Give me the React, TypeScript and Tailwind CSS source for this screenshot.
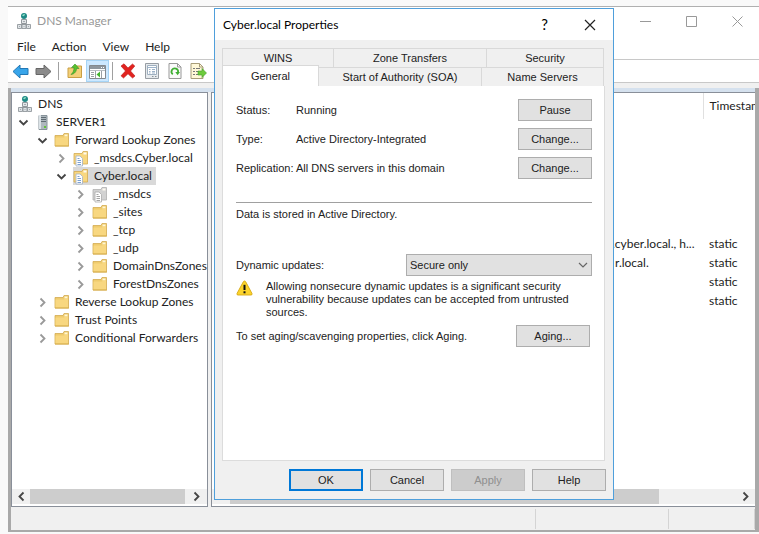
import type { ReactNode } from "react";

const uiFont = "font-['Lato','Open_Sans',sans-serif]";
const dialogFont = "font-['Liberation_Sans',Arial,sans-serif]";

function DnsIcon() {
  return (
    <svg width="16" height="18" viewBox="0 0 16 18" aria-hidden="true">
      <path d="M3 12.500h10" fill="none" stroke="#8a8f94" />
      <circle cx="8" cy="4" r="3" fill="#1f8a86" />
      <path d="M6 3.500q1-2 3-1.500l-.5 1.500-1 .7z" fill="#8fe0c8" />
      <path d="M5.500 7.500h5v4h-5z" fill="#e3e6e8" stroke="#92989d" />
      <path d="M1.500 12.500h4v4h-4zM6 12.500h4v4H6zM10.500 12.500h4v4h-4z" fill="#dfe3e6" stroke="#92989d" strokeWidth=".9" />
      <path d="M3 14.500h1M7.500 14.500h1M12 14.500h1M7 9.500h2" stroke="#a5abb0" />
    </svg>
  );
}

function ServerIcon() {
  return (
    <svg width="16" height="16" viewBox="0 0 16 16" aria-hidden="true">
      <path d="M4 1.500h8v14H4z" fill="#aeb8be" stroke="#87939a" />
      <path d="M4 1h2v14H4z" fill="#dbe2e6" />
      <path d="M6 3.500h5M6 5.500h5M6 7.500h5" stroke="#5f6b73" />
      <path d="M9 12h2v2H9z" fill="#5fc33a" />
    </svg>
  );
}

function FolderIcon() {
  return (
    <svg width="16" height="16" viewBox="0 0 16 16" aria-hidden="true">
      <path d="M1 3.500h8l1-2h4.500v12.500H1z" fill="#efcb6d" stroke="#d3ab52" strokeWidth=".8" />
      <path d="M10.500 2.500h3v2h-3z" fill="#fff6d5" />
      <path d="M1.500 5.500h8.500l1-1h3V13.500H1.500z" fill="#f8d780" />
      <path d="M1 14h14" stroke="#d9b04e" />
    </svg>
  );
}

function ZoneIcon({ muted = false }: { muted?: boolean }) {
  return (
    <svg width="16" height="17" viewBox="0 0 16 17" aria-hidden="true">
      <path
        d="M1 3.500h8l1-2h4.500v12.500H1z"
        fill={muted ? "#d2d2d2" : "#f8d780"}
        stroke={muted ? "#b0b0b0" : "#d3ab52"}
        strokeWidth=".8"
      />
      <path d="M10.500 2.500h3v2h-3z" fill="#fffaf0" />
      <path d="M3 6h4l2.500 2.500V16H3z" fill="#fff" stroke={muted ? "#aaa" : "#a3b3c6"} strokeWidth=".8" />
      <path d="M4.500 8.500h2M4.500 10.500h3.500M4.500 12.500h3.500M4.500 14.500h3.500" stroke={muted ? "#9a9a9a" : "#6d96cc"} strokeWidth=".9" />
    </svg>
  );
}

function Arrow({ left = false }: { left?: boolean }) {
  return (
    <svg width="17" height="15" viewBox="0 0 17 15" aria-hidden="true">
      {left ? (
        <path d="M1 7.500 8 1v3.500h8v6H8V14z" fill="#38a5ea" stroke="#2378b5" strokeLinejoin="round" />
      ) : (
        <path d="M16 7.500 9 1v3.500H1v6h8V14z" fill="#8b8b8b" stroke="#666" strokeLinejoin="round" />
      )}
    </svg>
  );
}

function FolderUpIcon() {
  return (
    <svg width="16" height="16" viewBox="0 0 16 16" aria-hidden="true">
      <path d="M1 5h7l1-2h5.500v11.500H1z" fill="#f4d078" stroke="#c99f45" />
      <path d="M4 11.500C8 11 9.500 8 9.500 5.500H12L8 1 4.500 4.500H7C7 7 6.500 9.500 4 11.500z" fill="#58c22e" stroke="#36902a" strokeWidth=".6" />
    </svg>
  );
}

function TreePaneIcon() {
  return (
    <svg width="17" height="15" viewBox="0 0 17 15" aria-hidden="true">
      <path d="M.5 1.500h16v13H.5z" fill="#fff" stroke="#84898e" />
      <path d="M1 2h15v3H1z" fill="#8e969d" />
      <path d="M12 3.500h1M14 3.500h1" stroke="#fff" />
      <path d="M1 6.500h15" stroke="#b9bec3" />
      <path d="M6.500 7v7M12.500 7v7" stroke="#9aa0a5" />
      <path d="M2 8.500h3M2 10.500h3M2 12.500h3" stroke="#9aa0a5" />
      <path d="M11 7.500v6L7.500 10.500z" fill="#42b52e" />
    </svg>
  );
}

function DeleteIcon() {
  return (
    <svg width="16" height="16" viewBox="0 0 16 16" aria-hidden="true">
      <path d="M1 3 4 .8 8 5l4.500-4 2.300 2L10.500 8l4.500 5-2.500 2L8 10.800 3.500 15 1 12.800 5.500 8z" fill="#e2231f" stroke="#b81a18" strokeWidth=".6" />
    </svg>
  );
}

function PropertiesIcon() {
  return (
    <svg width="16" height="16" viewBox="0 0 16 16" aria-hidden="true">
      <path d="M1.500.5h13v15h-13z" fill="#e6eaed" stroke="#979da3" />
      <path d="M3.500 2.500h9v9h-9z" fill="#fff" stroke="#9fb0c0" />
      <path d="M4 4.500h8" stroke="#9db4cb" />
      <path d="M5 6.500h1.500M8 6.500h3M5 8.500h1.500M8 8.500h3M5 10h1.500M8 10h3" stroke="#9cb2c8" />
      <path d="M8 13.500h1.500M11 13.500h1.500" stroke="#8a9299" />
    </svg>
  );
}

function RefreshIcon() {
  return (
    <svg width="14" height="16" viewBox="0 0 14 16" aria-hidden="true">
      <path d="M1 .5h8.500L13 4v11.500H1z" fill="#fafafa" stroke="#989898" />
      <path d="M9.500.5V4H13" fill="none" stroke="#989898" />
      <path d="M4.800 11.300A3.300 3.300 0 1 1 10 9.500" fill="none" stroke="#3fae32" strokeWidth="1.700" />
      <path d="M7.300 9h4.700l-2.400 3.300z" fill="#3fae32" />
    </svg>
  );
}

function ExportIcon() {
  return (
    <svg width="17" height="16" viewBox="0 0 17 16" aria-hidden="true">
      <path d="M1 .5h8.500L13 4v11.500H1z" fill="#fff8d8" stroke="#a79c78" />
      <path d="M9.500.5V4H13" fill="none" stroke="#a79c78" />
      <path d="M3 5.500h2M6 5.500h4M3 8.500h2M6 8.500h3M3 11.500h2M6 11.500h3" stroke="#777" />
      <path d="M8 8h4V5.500l4.500 4.500-4.500 4.500V12H8z" fill="#6ecb3c" stroke="#42a02a" strokeWidth=".6" />
    </svg>
  );
}

function WarningIcon() {
  return (
    <svg className="shrink-0" width="17" height="16" viewBox="0 0 17 16" aria-hidden="true">
      <path d="M8.500 1q.8 0 1.200.8l6.300 11.700q.5 1.500-1 1.500H2Q.5 15 1 13.500L7.300 1.800Q7.700 1 8.500 1z" fill="#fcd42c" stroke="#d6a713" strokeWidth=".9" />
      <path d="M8.500 4.800v5.200" stroke="#111" strokeWidth="2" />
      <path d="M8.500 11.300v2" stroke="#111" strokeWidth="2" />
    </svg>
  );
}

function Chevron({ dir, color = "#444" }: { dir: "left" | "right" | "down"; color?: string }) {
  const paths = { left: "M7.500 1.500 3.500 5.500l4 4", right: "M3.500 1.500l4 4-4 4", down: "M1.500 3.500l4 4 4-4" };
  return (
    <svg width="11" height="11" viewBox="0 0 11 11" aria-hidden="true">
      <path d={paths[dir]} fill="none" stroke={color} strokeWidth="1.800" />
    </svg>
  );
}

type Node = { label: string; level: 0 | 1 | 2 | 3 | 4; icon: ReactNode; open?: boolean; selected?: boolean };

const nodes: Node[] = [
  { label: "DNS", level: 0, icon: <DnsIcon /> },
  { label: "SERVER1", level: 1, icon: <ServerIcon />, open: true },
  { label: "Forward Lookup Zones", level: 2, icon: <FolderIcon />, open: true },
  { label: "_msdcs.Cyber.local", level: 3, icon: <ZoneIcon /> },
  { label: "Cyber.local", level: 3, icon: <ZoneIcon />, open: true, selected: true },
  { label: "_msdcs", level: 4, icon: <ZoneIcon muted /> },
  { label: "_sites", level: 4, icon: <FolderIcon /> },
  { label: "_tcp", level: 4, icon: <FolderIcon /> },
  { label: "_udp", level: 4, icon: <FolderIcon /> },
  { label: "DomainDnsZones", level: 4, icon: <FolderIcon /> },
  { label: "ForestDnsZones", level: 4, icon: <FolderIcon /> },
  { label: "Reverse Lookup Zones", level: 2, icon: <FolderIcon /> },
  { label: "Trust Points", level: 2, icon: <FolderIcon /> },
  { label: "Conditional Forwarders", level: 2, icon: <FolderIcon /> },
];

const indent = ["pl-[5px]", "pl-[3px]", "pl-[22px]", "pl-[41px]", "pl-[60px]"];

function TreeRow({ node }: { node: Node }) {
  return (
    <li role="treeitem" aria-selected={!!node.selected} className={`flex h-[18px] items-center ${indent[node.level]}`}>
      {node.level > 0 && (
        <button type="button" aria-label={node.open ? "Collapse" : "Expand"} className="flex w-5 shrink-0 items-center pl-[3px]">
          <Chevron dir={node.open ? "down" : "right"} color={node.open ? "#444" : "#999"} />
        </button>
      )}
      <span className={`flex h-[18px] items-center gap-[5px] whitespace-nowrap ${node.selected ? "bg-[#d9d9d9] pr-1" : ""}`}>
        <span className="shrink-0">{node.icon}</span>
        {node.label}
      </span>
    </li>
  );
}

const records = [
  { data: ".cyber.local., h...", time: "static" },
  { data: "r.local.", time: "static" },
  { data: "", time: "static" },
  { data: "", time: "static" },
];

function Separator() {
  return <span className="h-[18px] w-px shrink-0 bg-[#a0a0a0]" />;
}

function ToolButton({ label, children }: { label: string; children: ReactNode }) {
  return (
    <button type="button" aria-label={label} className="flex h-5 shrink-0 items-center">
      {children}
    </button>
  );
}

function PushButton({ children, look = "border-[#adadad] bg-[#e1e1e1]", disabled = false }: { children: ReactNode; look?: string; disabled?: boolean }) {
  return (
    <button type="button" disabled={disabled} className={`h-[22px] w-[74px] shrink-0 border ${look}`}>
      {children}
    </button>
  );
}

function Tab({ children, selected = false, size }: { children: ReactNode; selected?: boolean; size: string }) {
  return (
    <button
      type="button"
      role="tab"
      aria-selected={selected}
      className={`border-t border-r border-[#d9d9d9] ${size} ${selected ? "-mt-[2px] h-[21px] bg-white" : "h-[19px] bg-[#f0f0f0]"}`}
    >
      {children}
    </button>
  );
}

function PropertiesDialog() {
  return (
    <section
      role="dialog"
      aria-label="Cyber.local Properties"
      className={`absolute top-2 left-[214px] flex h-[492px] w-[400px] flex-col border border-[#4f9fdb] bg-[#f0f0f0] text-[11px] leading-[13px] text-[#222] ${dialogFont}`}
    >
      <header className={`flex h-[31px] shrink-0 items-center bg-white pr-[17px] pl-2 text-[12px] text-black ${uiFont}`}>
        <h2 className="flex-1">Cyber.local Properties</h2>
        <button type="button" aria-label="Help" className="mr-9 text-[15px]">?</button>
        <button type="button" aria-label="Close">
          <svg width="12" height="12" viewBox="0 0 12 12"><path d="M1 1l10 10M11 1 1 11" stroke="#222" strokeWidth="1.200" /></svg>
        </button>
      </header>

      <div className="flex flex-1 flex-col pt-2 pr-2 pl-[7px]">
        <div role="tablist" className="border-l border-[#d9d9d9]">
          <div className="flex">
            <Tab size="w-[111px]">WINS</Tab>
            <Tab size="w-[153px]">Zone Transfers</Tab>
            <Tab size="w-[117px]">Security</Tab>
          </div>
          <div className="flex">
            <Tab size="w-[96px]" selected>General</Tab>
            <Tab size="w-[163px]">Start of Authority (SOA)</Tab>
            <Tab size="w-[122px]">Name Servers</Tab>
          </div>
        </div>

        <div className="flex flex-1 flex-col border-r border-b border-l border-[#dcdcdc] bg-white pt-[13px] pr-3 pl-[13px]">
          <dl className="flex flex-col gap-[7px]">
            {[
              ["Status:", "Running", "Pause"],
              ["Type:", "Active Directory-Integrated", "Change..."],
              ["Replication:", "All DNS servers in this domain", "Change..."],
            ].map(([name, value, action]) => (
              <div key={name} className="flex items-center">
                <dt className="w-[60px] whitespace-nowrap">{name}</dt>
                <dd className="flex-1">{value}</dd>
                <dd className="flex"><PushButton>{action}</PushButton></dd>
              </div>
            ))}
          </dl>
          <hr className="mt-[23px] border-[#a0a0a0]" />
          <p className="mt-[5px]">Data is stored in Active Directory.</p>

          <div className="mt-[33px] flex items-center">
            <label htmlFor="updates" className="flex-1">Dynamic updates:</label>
            <span className="relative flex w-[186px]">
              <select id="updates" className="h-[22px] w-full appearance-none border border-[#adadad] bg-[#e1e1e1] pl-[3px] outline-none">
                <option>Secure only</option>
              </select>
              <svg className="pointer-events-none absolute top-2 right-1" width="10" height="7" viewBox="0 0 10 7"><path d="M1 1l4 4 4-4" fill="none" stroke="#666" strokeWidth="1.200" /></svg>
            </span>
          </div>
          <div className="mt-[4px] flex gap-[13px]">
            <WarningIcon />
            <p className="whitespace-nowrap">
              Allowing nonsecure dynamic updates is a significant security<br />
              vulnerability because updates can be accepted from untrusted<br />
              sources.
            </p>
          </div>
          <div className="mt-[6px] flex items-center pr-[2px]">
            <p className="flex-1">To set aging/scavenging properties, click Aging.</p>
            <PushButton>Aging...</PushButton>
          </div>
        </div>

        <footer className="-mr-[1px] flex h-[38px] shrink-0 items-start justify-end gap-[7px] pt-[8px]">
          <PushButton look="border-2 border-[#0078d7] bg-[#e1e1e1]">OK</PushButton>
          <PushButton>Cancel</PushButton>
          <PushButton disabled look="border-[#bfbfbf] bg-[#cccccc] text-[#8f8f8f]">Apply</PushButton>
          <PushButton>Help</PushButton>
        </footer>
      </div>
    </section>
  );
}

export default function App() {
  return (
    <div className={`relative flex h-screen flex-col overflow-hidden bg-[#f9f9f9] pt-[6px] pb-[2px] pl-2 text-[12px] leading-4 text-[#222] ${uiFont}`}>
      <main className="flex min-h-0 flex-1 flex-col border-t border-[#b0b0b0] bg-white">
        <header className="flex h-7 shrink-0 items-center gap-[5px] pr-4 pl-2">
          <DnsIcon />
          <h1 className="flex-1 text-[#999]">DNS Manager</h1>
          <div className="flex items-center gap-[35px]">
            <button type="button" aria-label="Minimize"><svg width="11" height="11" viewBox="0 0 11 11"><path d="M0 5.500h11" stroke="#999" /></svg></button>
            <button type="button" aria-label="Maximize"><svg width="11" height="11" viewBox="0 0 11 11"><path d="M.5.5h10v10H.5z" fill="none" stroke="#999" /></svg></button>
            <button type="button" aria-label="Close"><svg width="11" height="11" viewBox="0 0 11 11"><path d="M.5.5l10 10M10.500.5l-10 10" stroke="#999" /></svg></button>
          </div>
        </header>
        <nav className="flex h-6 shrink-0 items-center gap-4 pl-[9px]">
          <button type="button">File</button>
          <button type="button">Action</button>
          <button type="button">View</button>
          <button type="button">Help</button>
        </nav>
        <div className="flex h-6 shrink-0 items-center border-y border-[#c8c8c8] pl-[4px]">
          <div className="flex items-center gap-[6px]">
            <ToolButton label="Back"><Arrow left /></ToolButton>
            <ToolButton label="Forward"><Arrow /></ToolButton>
            <Separator />
          </div>
          <div className="ml-2 flex items-center gap-[3px]">
            <ToolButton label="Up one level"><FolderUpIcon /></ToolButton>
            <button type="button" aria-label="Show console tree" className="flex h-[22px] w-[23px] items-center justify-center border border-[#a6d4f5] bg-[#cce8ff]"><TreePaneIcon /></button>
            <Separator />
          </div>
          <div className="ml-[7px] flex items-center gap-2">
            <ToolButton label="Delete"><DeleteIcon /></ToolButton>
            <ToolButton label="Properties"><PropertiesIcon /></ToolButton>
            <ToolButton label="Refresh"><RefreshIcon /></ToolButton>
            <ToolButton label="Export list"><ExportIcon /></ToolButton>
            <Separator />
          </div>
        </div>
        <div className="h-[5px] shrink-0 bg-[#f0f0f0]" />

        <div className="flex min-h-0 flex-1 flex-col border-r-4 border-b-2 border-l-[3px] border-[#a9a9a9] bg-[#f0f0f0]">
          <div className="h-1 shrink-0 bg-[#d5e1ee]" />
          <div className="flex min-h-0 flex-1 gap-[3px]">
            <aside className="flex w-[197px] shrink-0 flex-col overflow-hidden border border-[#898f99] bg-white pb-[2px]">
              <ul role="tree" className="flex-1 overflow-hidden pt-[2px]">
                {nodes.map((node, i) => <TreeRow key={i} node={node} />)}
              </ul>
              <div className="flex h-[15px] shrink-0 items-center bg-[#f0f0f0]">
                <button type="button" aria-label="Scroll left" className="flex w-[18px] justify-center"><Chevron dir="left" /></button>
                <span className="h-full flex-1 bg-[#cdcdcd]" />
                <button type="button" aria-label="Scroll right" className="flex w-[22px] justify-center"><Chevron dir="right" /></button>
              </div>
            </aside>
            <section className="flex min-w-0 flex-1 flex-col overflow-hidden border-y border-l border-[#898f99] bg-white pb-[2px]">
              <div className="flex-1 overflow-hidden">
                <table className="w-full table-fixed text-left whitespace-nowrap">
                  <thead>
                    <tr className="h-[26px]">
                      <th className="w-[400px]" />
                      <th className="w-[91px] border-r border-[#e0e0e0]" />
                      <th className="overflow-hidden pl-[6px] font-normal">Timestamp</th>
                    </tr>
                  </thead>
                  <tbody>
                    <tr className="h-[115px]"><td colSpan={3} /></tr>
                    {records.map((r, i) => (
                      <tr key={i} className="h-[19px]">
                        <td />
                        <td className={i === 1 ? "pl-[3px]" : ""}>{r.data}</td>
                        <td className="pl-[6px]">{r.time}</td>
                      </tr>
                    ))}
                  </tbody>
                </table>
              </div>
              <div className="flex h-[15px] shrink-0 items-center bg-[#f0f0f0] pl-[18px]">
                <span className="h-full w-[429px] bg-[#cdcdcd]" />
                <span className="flex-1" />
                <button type="button" aria-label="Scroll right" className="flex w-[20px] justify-center"><Chevron dir="right" /></button>
              </div>
            </section>
          </div>
          <footer className="flex h-[23px] shrink-0 justify-end pt-[2px] pb-px">
            <span className="w-[133px] border-l border-[#d4d4d4]" />
            <span className="w-[87px] border-x border-[#d4d4d4]" />
          </footer>
        </div>
      </main>
      <PropertiesDialog />
    </div>
  );
}
